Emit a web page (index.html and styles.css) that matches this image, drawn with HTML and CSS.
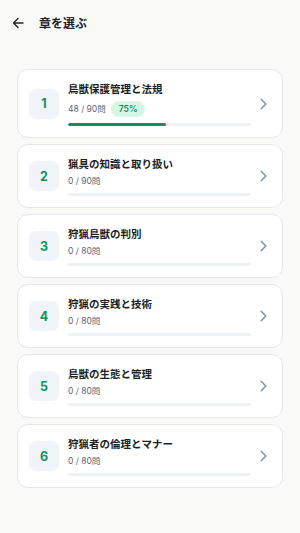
FILE: index.html
```html
<!DOCTYPE html>
<html lang="ja">
<head>
<meta charset="utf-8">
<link rel="stylesheet" href="styles.css">
</head>
<body>
<header class="header">
  <svg class="back" width="12" height="12" viewBox="0 0 12 12"><path d="M11 6H1.5M6 1.5L1.5 6L6 10.5" fill="none" stroke="#1f2430" stroke-width="1.4" stroke-linecap="round" stroke-linejoin="round"/></svg>
  <h1 class="title">章を選ぶ</h1>
</header>
<main class="list">
  <div class="card">
    <div class="num">1</div>
    <div class="body">
      <div class="name">鳥獣保護管理と法規</div>
      <div class="sub"><span class="count">48 / 90問</span><span class="badge">75%</span></div>
      <div class="bar"><div class="fill" style="width:53.3%"></div></div>
    </div>
    <svg class="chev" width="7" height="12" viewBox="0 0 7 12"><path d="M1.2 1.2L5.8 6L1.2 10.8" fill="none" stroke="#8190a8" stroke-width="1.5" stroke-linecap="round" stroke-linejoin="round"/></svg>
  </div>
  <div class="card">
    <div class="num">2</div>
    <div class="body">
      <div class="name">猟具の知識と取り扱い</div>
      <div class="sub"><span class="count">0 / 90問</span></div>
      <div class="bar"></div>
    </div>
    <svg class="chev" width="7" height="12" viewBox="0 0 7 12"><path d="M1.2 1.2L5.8 6L1.2 10.8" fill="none" stroke="#8190a8" stroke-width="1.5" stroke-linecap="round" stroke-linejoin="round"/></svg>
  </div>
  <div class="card">
    <div class="num">3</div>
    <div class="body">
      <div class="name">狩猟鳥獣の判別</div>
      <div class="sub"><span class="count">0 / 80問</span></div>
      <div class="bar"></div>
    </div>
    <svg class="chev" width="7" height="12" viewBox="0 0 7 12"><path d="M1.2 1.2L5.8 6L1.2 10.8" fill="none" stroke="#8190a8" stroke-width="1.5" stroke-linecap="round" stroke-linejoin="round"/></svg>
  </div>
  <div class="card">
    <div class="num">4</div>
    <div class="body">
      <div class="name">狩猟の実践と技術</div>
      <div class="sub"><span class="count">0 / 80問</span></div>
      <div class="bar"></div>
    </div>
    <svg class="chev" width="7" height="12" viewBox="0 0 7 12"><path d="M1.2 1.2L5.8 6L1.2 10.8" fill="none" stroke="#8190a8" stroke-width="1.5" stroke-linecap="round" stroke-linejoin="round"/></svg>
  </div>
  <div class="card">
    <div class="num">5</div>
    <div class="body">
      <div class="name">鳥獣の生態と管理</div>
      <div class="sub"><span class="count">0 / 80問</span></div>
      <div class="bar"></div>
    </div>
    <svg class="chev" width="7" height="12" viewBox="0 0 7 12"><path d="M1.2 1.2L5.8 6L1.2 10.8" fill="none" stroke="#8190a8" stroke-width="1.5" stroke-linecap="round" stroke-linejoin="round"/></svg>
  </div>
  <div class="card">
    <div class="num">6</div>
    <div class="body">
      <div class="name">狩猟者の倫理とマナー</div>
      <div class="sub"><span class="count">0 / 80問</span></div>
      <div class="bar"></div>
    </div>
    <svg class="chev" width="7" height="12" viewBox="0 0 7 12"><path d="M1.2 1.2L5.8 6L1.2 10.8" fill="none" stroke="#8190a8" stroke-width="1.5" stroke-linecap="round" stroke-linejoin="round"/></svg>
  </div>
</main>
</body>
</html>
```
FILE: styles.css
```css
* { box-sizing: border-box; }
html, body { margin: 0; padding: 0; }
body {
  background: #f9f9f7;
  font-family: Inter, "Noto Sans CJK JP", sans-serif;
  color: #1f2430;
  width: 300px;
  min-height: 533px;
}
.header {
  height: 45px;
  display: flex;
  align-items: center;
  padding: 0 12px 0 12px;
  gap: 15px;
}
.back { display: block; flex: none; }
.title {
  margin: 0;
  font-family: "Noto Sans CJK JP", sans-serif;
  font-size: 12px;
  font-weight: 700;
  line-height: 16px;
}
.list {
  padding: 24px 17px 20px 17px;
  display: flex;
  flex-direction: column;
  gap: 6px;
}
.card {
  background: #fff;
  border: 1px solid #e6e8ec;
  border-radius: 11px;
  padding: 11px 15px 11px 11px;
  display: flex;
  align-items: center;
  gap: 9px;
}
.num {
  width: 30px;
  height: 30px;
  flex: none;
  border-radius: 7px;
  background: #f0f3f8;
  color: #13925c;
  font-weight: 700;
  font-size: 12.5px;
  display: flex;
  align-items: center;
  justify-content: center;
}
.body {
  flex: 1;
  min-width: 0;
}
.name {
  font-family: "Noto Sans CJK JP", sans-serif;
  font-size: 10.5px;
  font-weight: 600;
  line-height: 16px;
  color: #1c1f27;
}
.sub {
  margin-top: 4px;
  display: flex;
  align-items: center;
  gap: 5px;
  min-height: 11px;
}
.count {
  font-size: 8.5px;
  line-height: 11px;
  color: #5e6675;
}
.badge {
  background: #d5f7e4;
  color: #13925c;
  font-size: 8.5px;
  font-weight: 600;
  line-height: 16px;
  height: 16px;
  padding: 0 8px;
  border-radius: 8px;
}
.bar {
  margin-top: 6px;
  height: 3px;
  border-radius: 2px;
  background: #eef1f6;
  overflow: hidden;
}
.fill {
  height: 100%;
  background: #0f8f5a;
  border-radius: 2px;
}
.chev { display: block; flex: none; }
```
